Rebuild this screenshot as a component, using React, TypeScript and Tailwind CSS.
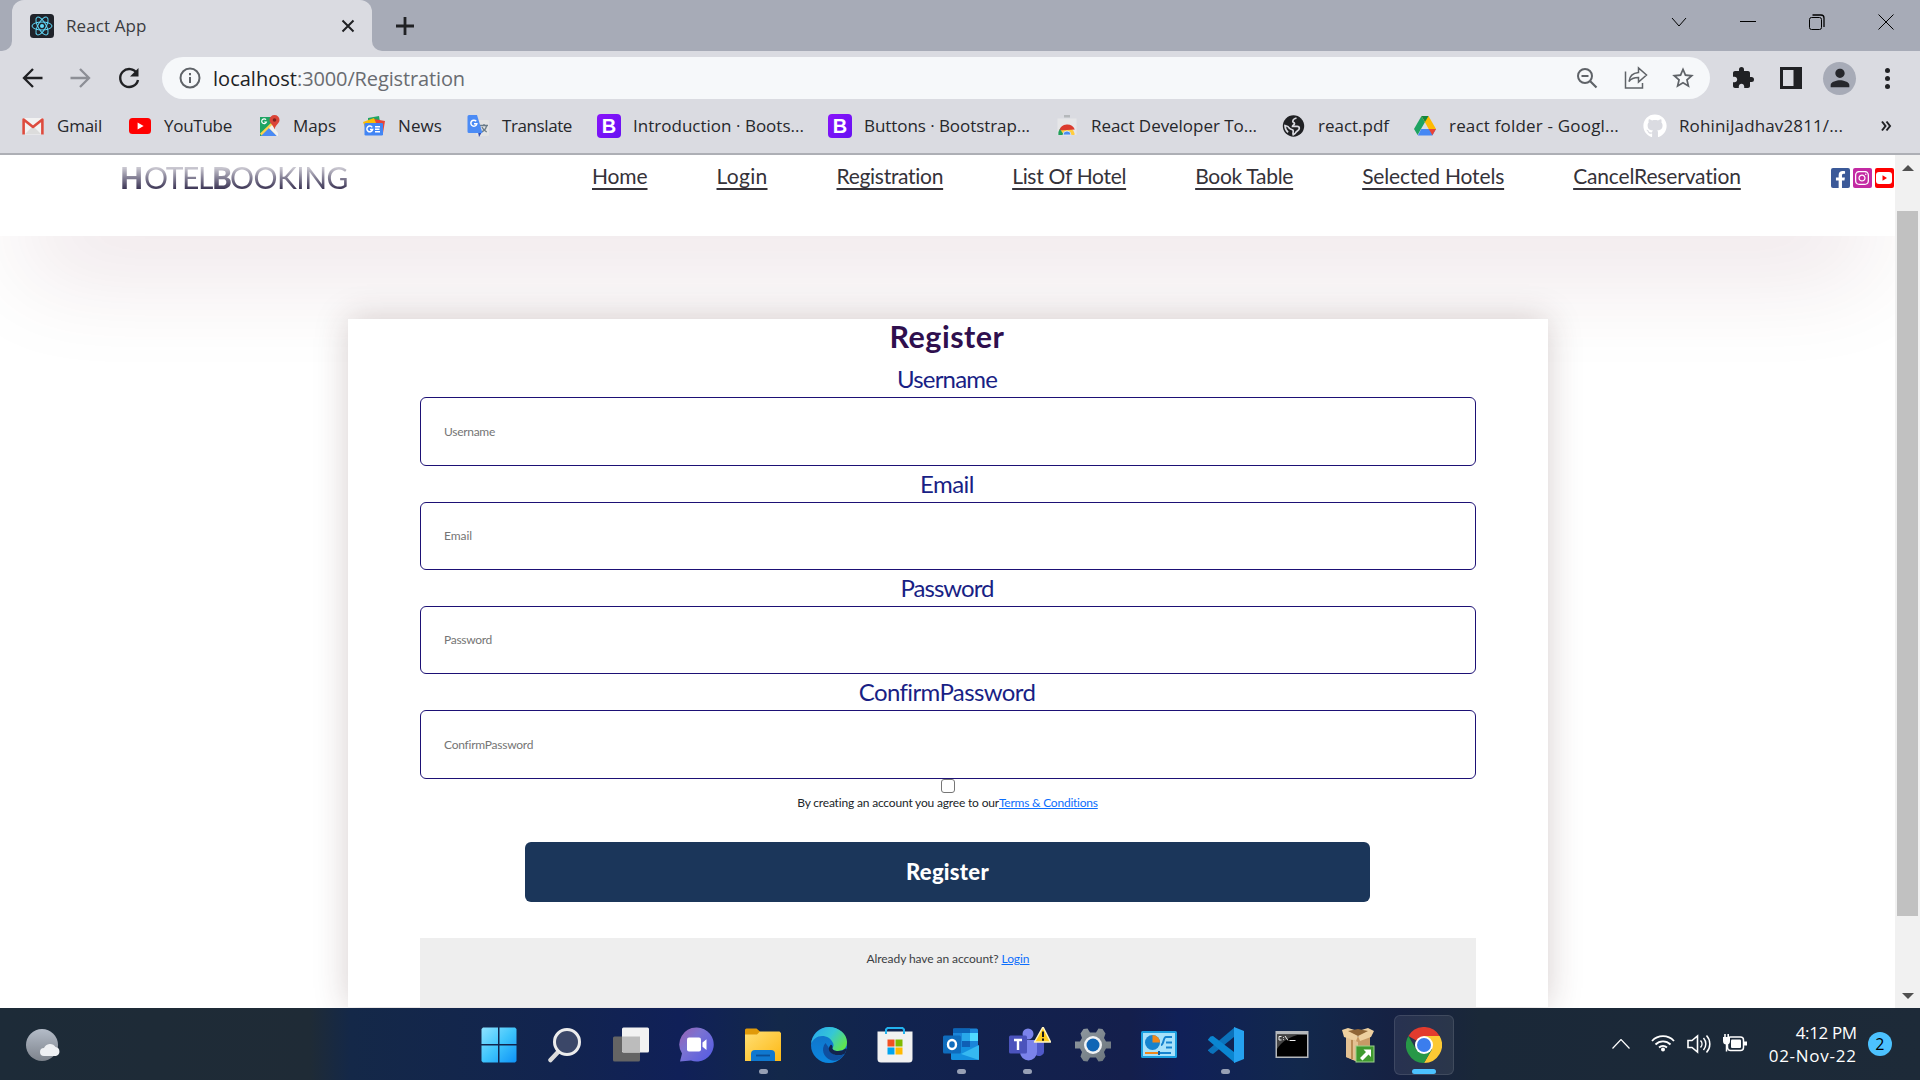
import { useLayoutEffect, useRef } from "react";
import type { ReactNode } from "react";
import { FaFacebookF, FaGithub, FaInstagram } from "react-icons/fa";
import { MdExtension, MdPerson, MdStarBorder } from "react-icons/md";

/** Inline text whose tracking is adjusted so that it fills exactly `w` pixels. */
function Fit({ w, className = "", children }: { w: number; className?: string; children: string }) {
  const ref = useRef<HTMLSpanElement>(null);
  useLayoutEffect(() => {
    const el = ref.current;
    if (!el) return;
    el.style.letterSpacing = "0px";
    const natural = el.getBoundingClientRect().width;
    el.style.letterSpacing = `${(w - natural) / children.length}px`;
  }, [w, children]);
  return (
    <span ref={ref} className={`inline-block whitespace-pre ${className}`}>
      {children}
    </span>
  );
}

/* ---------- bookmark icons ---------- */

const GmailIcon = () => (
  <svg viewBox="0 0 24 24" className="size-6">
    <rect x="1.5" y="4" width="21" height="16.5" rx="1.5" fill="#f2f2f2" />
    <path d="M4 20 12 12l8 8z" fill="#dcdcdc" />
    <path d="M2.6 20.5V5.6L12 13l9.4-7.4v14.9" fill="none" stroke="#dd4b3e" strokeWidth="2.6" strokeLinejoin="round" />
  </svg>
);
const YouTubeIcon = () => (
  <svg viewBox="0 0 24 24" className="size-6">
    <rect x="1" y="4" width="22" height="16" rx="3.5" fill="#f00" />
    <path d="M9.6 8.6v6.8l6-3.4z" fill="#fff" />
  </svg>
);
const MapsIcon = () => (
  <svg viewBox="0 0 24 24" className="size-6">
    <path d="M3 3h15v19H3z" fill="#1fa463" />
    <path d="M3 19.500 14 9l4 3v10H5z" fill="#fbd24b" />
    <path d="m4 22 8-8 8 8z" fill="#4a8af4" />
    <path d="m12 14 3-3 6 8v3h-1z" fill="#f1f1f1" />
    <path d="M9 5.700A2.400 2.400 0 1 0 9.400 8H7.200" fill="none" stroke="#fff" strokeWidth="1.200" />
    <path d="M17.500 1a5 5 0 0 0-5 5c0 3.500 4 4.500 5 9.500 1-5 5-6 5-9.500a5 5 0 0 0-5-5z" fill="#db4437" />
    <circle cx="17.500" cy="6" r="1.800" fill="#7b231e" />
  </svg>
);
const NewsIcon = () => (
  <svg viewBox="0 0 24 24" className="size-6">
    <path d="m6 4 11-2 1 6H6z" fill="#1fa463" />
    <path d="m12 5 11 2-2 12-9-2z" fill="#ea4335" />
    <path d="m1 8 11-4 4 10-11 5z" fill="#fbbc04" />
    <rect x="2.500" y="9" width="18.500" height="12.500" rx="1.300" fill="#4285f4" />
    <path d="M10.200 13.300A2.900 2.900 0 1 0 10.600 15.600H8M13 12.800h5M13 15.300h4.500M13 17.800h5" fill="none" stroke="#fff" strokeWidth="1.500" />
  </svg>
);
const TranslateIcon = () => (
  <svg viewBox="0 0 24 24" className="size-6">
    <rect x="10" y="6" width="13" height="16" rx="1.500" fill="#e3e3e3" />
    <path d="M14 11.500h8M18 10v1.500M20.500 12c-.6 3-3 5-5 6M16 13c1 2.500 3 4 4.700 5" stroke="#6b7c88" strokeWidth="1.300" fill="none" />
    <path d="m12 18 4 0-3 5z" fill="#3350b5" />
    <path d="M3 1h8l5.500 18H3a1.500 1.500 0 0 1-1.500-1.500v-15A1.500 1.500 0 0 1 3 1z" fill="#4b8bf5" />
    <path d="M10.200 7.300A3 3 0 1 0 10.800 9.800H8" fill="none" stroke="#fff" strokeWidth="1.500" />
  </svg>
);
const BootstrapIcon = () => (
  <span className="flex size-6 items-center justify-center rounded-[4px] bg-gradient-to-br from-[#8a12fb] to-[#6610f2] font-['Liberation_Sans'] text-[20px] leading-none font-bold text-white">
    B
  </span>
);
const WebStoreIcon = () => (
  <svg viewBox="0 0 24 24" className="size-6">
    <path d="M9 1h6v2.500H9z" fill="#b5b8bb" />
    <path d="M2.500 4.500h19V21h-19z" fill="#e6e6e8" />
    <path d="M4.500 21v-1.500a7.600 7.600 0 0 1 15 0V21z" fill="#ffcd40" />
    <path d="M4.200 16.500a8.300 8.300 0 0 1 15.600-1L12 16z" fill="#db3b2e" />
    <path d="M3.400 21c-.3-3 .4-4.500 1.500-6l4 6z" fill="#22a05a" />
    <path d="M8 21a4 4 0 1 1 8 0z" fill="#4a8cf0" stroke="#e8eefa" strokeWidth=".8" />
  </svg>
);
const GlobeIcon = () => (
  <svg viewBox="0 0 24 24" className="size-6">
    <circle cx="11.500" cy="12" r="10.700" fill="#202124" />
    <path d="M14.500 4.200c-1.500.2-3.700 1.500-3.700 3.300 0 1.200 1.700 1 1.700 2.200 0 1.300-2 1.300-2 2.600h4.800c1.300 0 2 1 2 2 0 2.500-2.800 2.200-4.200 5.200l-1.900 1.200c-1-1.700 1-3.500-.4-4.700-1.300-1-3.500-.8-4-2.400-.3-1.400-2.300-1.600-3.800-2 .1 3 1.300 5.200 3.100 6.800" fill="none" stroke="#d9dae0" strokeWidth="1.700" />
  </svg>
);
const DriveIcon = () => (
  <svg viewBox="0 0 24 24" className="size-6">
    <path d="M8.500 2 1 15l3.600 6L12 8z" fill="#1ea362" />
    <path d="M8.500 2h7L23 15h-7.300z" fill="#ffba00" />
    <path d="M15.700 15H23l-3.600 6.500H4.800l3.500-6.400h8z" fill="#4688f4" />
    <path d="M15.700 15H23l-3.600 6.200z" fill="#ea4335" />
    <path d="M8.500 2h7L12 8z" fill="#11863f" />
  </svg>
);

const BOOKMARKS: { icon: ReactNode; label: string; w: number }[] = [
  { icon: <GmailIcon />, label: "Gmail", w: 45 },
  { icon: <YouTubeIcon />, label: "YouTube", w: 68 },
  { icon: <MapsIcon />, label: "Maps", w: 43 },
  { icon: <NewsIcon />, label: "News", w: 44 },
  { icon: <TranslateIcon />, label: "Translate", w: 70 },
  { icon: <BootstrapIcon />, label: "Introduction · Boots...", w: 171 },
  { icon: <BootstrapIcon />, label: "Buttons · Bootstrap...", w: 166 },
  { icon: <WebStoreIcon />, label: "React Developer To...", w: 166 },
  { icon: <GlobeIcon />, label: "react.pdf", w: 71 },
  { icon: <DriveIcon />, label: "react folder - Googl...", w: 170 },
  { icon: <FaGithub className="size-6 text-white" />, label: "RohiniJadhav2811/...", w: 164 },
];

/* ---------- browser chrome ---------- */

function TabStrip() {
  return (
    <div className="flex h-[51px] bg-[#a7abb7]">
      <div className="flex w-3 items-end bg-[#dadbe1]">
        <div className="h-full w-full rounded-br-[10px] bg-[#a7abb7]" />
      </div>
      <div className="bg-[#a7abb7]">
        <div className="flex h-[51px] w-[360px] items-center rounded-t-[12px] bg-[#dadbe1] pl-[18px]">
          <svg viewBox="0 0 24 24" className="size-6">
            <rect width="24" height="24" rx="3.500" fill="#20232a" />
            <g fill="none" stroke="#61dafb" strokeWidth="1">
              <ellipse cx="12" cy="12" rx="10" ry="4" />
              <ellipse cx="12" cy="12" rx="10" ry="4" transform="rotate(60 12 12)" />
              <ellipse cx="12" cy="12" rx="10" ry="4" transform="rotate(120 12 12)" />
            </g>
            <circle cx="12" cy="12" r="2" fill="#61dafb" />
          </svg>
          <Fit w={80.500} className="ml-3 text-[17px] text-[#3a3b40]">React App</Fit>
          <svg viewBox="0 0 14 14" className="mr-[17px] ml-auto size-[14px]">
            <path d="m1.500 1.500 11 11m0-11-11 11" stroke="#202124" strokeWidth="2" />
          </svg>
        </div>
      </div>
      <div className="w-3 bg-[#dadbe1]">
        <div className="h-full rounded-bl-[10px] bg-[#a7abb7]" />
      </div>
      <svg viewBox="0 0 18 18" className="mt-[17px] ml-3 size-[18px]">
        <path d="M9 0v18M0 9h18" stroke="#202124" strokeWidth="2.800" />
      </svg>
      <div className="mt-[14px] mr-[26px] ml-auto flex h-4 items-center text-black">
        <svg viewBox="0 0 16 16" className="size-4"><path d="m1 4 7 8 7-8" fill="none" stroke="currentColor" /></svg>
        <svg viewBox="0 0 16 16" className="ml-[53px] size-4"><path d="M0 7.500h16" stroke="currentColor" /></svg>
        <svg viewBox="0 0 16 16" className="ml-[53px] size-4">
          <rect x=".5" y="3.500" width="12" height="12" rx="2" fill="none" stroke="currentColor" />
          <path d="M3.500 1h8.500a3 3 0 0 1 3 3v9" fill="none" stroke="currentColor" strokeWidth="1.300" />
        </svg>
        <svg viewBox="0 0 16 16" className="ml-[53px] size-4"><path d="m.5.500 15 15m0-15-15 15" stroke="currentColor" /></svg>
      </div>
    </div>
  );
}

function Toolbar() {
  return (
    <div className="flex h-[54px] items-center pl-[21px]">
      <svg viewBox="0 0 24 24" className="size-6">
        <path d="M21.500 12H3M12 3l-9 9 9 9" fill="none" stroke="#202124" strokeWidth="2.300" />
      </svg>
      <svg viewBox="0 0 24 24" className="ml-6 size-6">
        <path d="M1.500 12H20M11 3l9 9-9 9" fill="none" stroke="#8d8f96" strokeWidth="2.300" />
      </svg>
      <svg viewBox="0 0 24 24" className="ml-6 size-6">
        <path d="M20 7.500A9 9 0 1 0 21 14" fill="none" stroke="#202124" strokeWidth="2.400" />
        <path d="M21.500 2v8.500H13z" fill="#202124" />
      </svg>
      <div className="ml-[21px] flex h-[42px] w-[1548px] items-center rounded-full bg-[#f6f8fa] pl-[17px]">
        <svg viewBox="0 0 22 22" className="size-[22px]">
          <circle cx="11" cy="11" r="9.500" fill="none" stroke="#5f6368" strokeWidth="2" />
          <path d="M11 10v6M11 6v2.200" stroke="#5f6368" strokeWidth="2" />
        </svg>
        <div className="mt-[2px] ml-[12px] text-[20px] leading-none">
          <Fit w={84} className="text-[#202124]">localhost</Fit>
          <Fit w={168} className="text-[#696c71]">:3000/Registration</Fit>
        </div>
        <svg viewBox="0 0 22 22" className="mr-[26px] ml-auto size-[22px]">
          <circle cx="9" cy="9" r="7" fill="none" stroke="#5f6368" strokeWidth="2" />
          <path d="M5.500 9h7M14 14l6.500 6.500" stroke="#5f6368" strokeWidth="2.200" />
        </svg>
        <svg viewBox="0 0 24 24" className="mr-[22px] size-6">
          <path d="M1.500 5.500V22h17v-5M14.500 6.500V2L22.500 9l-8 7v-4.500c-5 0-7.500 1-9.500 4 .5-5 3.500-8.500 9.500-9z" fill="none" stroke="#5f6368" strokeWidth="1.500" />
        </svg>
        <MdStarBorder className="mr-[14px] size-[26px] text-[#5f6368]" />
      </div>
      <MdExtension className="ml-[21px] size-6 text-[#202124]" />
      <svg viewBox="0 0 22 22" className="ml-[25px] size-[22px]">
        <path fillRule="evenodd" d="M0 0h22v22H0zM3 3h10.500v16H3z" fill="#202124" />
      </svg>
      <div className="ml-[21px] flex size-[33px] items-center justify-center rounded-full bg-[#a7abb7]">
        <MdPerson className="size-[28px] text-[#26272c]" />
      </div>
      <div className="ml-[29px] flex flex-col gap-[3px]">
        <i className="size-[5px] rounded-full bg-[#202124]" />
        <i className="size-[5px] rounded-full bg-[#202124]" />
        <i className="size-[5px] rounded-full bg-[#202124]" />
      </div>
    </div>
  );
}

function BookmarkBar() {
  return (
    <div className="grid h-[42px] grid-cols-[107px_129px_105px_104px_131px_231px_227px_227px_131px_230px_238px_20px] items-center pl-[21px] text-[17px] text-[#26272b]">
      {BOOKMARKS.map((b, i) => (
        <div key={i} className="flex items-center gap-3">
          {b.icon}
          <Fit w={b.w} className="leading-6">{b.label}</Fit>
        </div>
      ))}
      <svg viewBox="0 0 12 12" className="ml-[-1px] size-3">
        <path d="m2 1.500 3.500 4.500L2 10.500M6.500 1.500 10 6l-3.500 4.500" fill="none" stroke="#202124" strokeWidth="2" />
      </svg>
    </div>
  );
}

/* ---------- hotel page ---------- */

const LINKS: [string, number][] = [
  ["Home", 55.500], ["Login", 51], ["Registration", 107], ["List Of Hotel", 114],
  ["Book Table", 98], ["Selected Hotels", 142], ["CancelReservation", 168],
];

function NavBar() {
  return (
    <nav className="-mt-[60px] flex h-[141px] shrink-0 bg-white pt-[60px] pl-[120px] shadow-[0_65px_100px_-25px_rgba(90,0,35,0.11)]">
      <div className="mt-[4px] h-9 w-[229px] bg-gradient-to-b from-[#c9c7d0] from-25% to-[#2f2748] to-90% bg-clip-text text-[30px] leading-9 whitespace-nowrap text-transparent">
        <Fit w={24} className="font-black">H</Fit>
        <Fit w={68} className="font-normal">OTEL</Fit>
        <Fit w={18} className="font-black">B</Fit>
        <Fit w={118} className="font-normal">OOKING</Fit>
      </div>
      <div className="mt-[5px] ml-[243px] flex h-8 gap-[69px] text-[21px] leading-8 text-[#353239]">
        {LINKS.map(([label, w]) => (
          <a key={label}>
            <Fit w={w} className="underline decoration-2 underline-offset-[4px]">{label}</Fit>
          </a>
        ))}
      </div>
      <div className="mt-[13px] ml-[90px] flex h-5 gap-[3px]">
        <span className="flex h-5 w-[19px] items-end justify-center rounded-[2px] bg-[#3b5998]"><FaFacebookF className="size-[17px] text-white" /></span>
        <span className="flex h-5 w-[19px] items-center justify-center rounded-[2px] bg-[#c32aa3]"><FaInstagram className="size-[16px] text-white" /></span>
        <span className="flex h-5 w-[19px] items-center justify-center rounded-[2px] bg-[#f00]">
          <svg viewBox="0 0 16 12" className="h-3 w-4"><rect width="16" height="12" rx="3" fill="#fff" /><path d="M6.500 3.300v5.400L11 6z" fill="#f00" /></svg>
        </span>
      </div>
    </nav>
  );
}

const FIELDS: { label: string; w: number; pw: number; box: string }[] = [
  { label: "Username", w: 100, pw: 51, box: "h-[69px]" },
  { label: "Email", w: 54, pw: 28, box: "h-[68px]" },
  { label: "Password", w: 93, pw: 48, box: "h-[68px]" },
  { label: "ConfirmPassword", w: 176, pw: 89, box: "h-[69px]" },
];

function RegisterCard() {
  return (
    <div className="mt-[83px] ml-[348px] flex h-[688px] w-[1200px] shrink-0 flex-col items-center bg-white px-[72px] shadow-[0_0_32px_rgba(70,30,30,0.22)]">
      <h1 className="mr-[2px] h-[42px] text-[30.500px] leading-[35px] font-bold text-[#2f0f4e]"><Fit w={115}>Register</Fit></h1>
      {FIELDS.map((f) => (
        <label key={f.label} className="flex w-full flex-col items-center">
          <span className="mr-[2px] h-9 text-[24px] leading-[35px] text-[#191f85]"><Fit w={f.w}>{f.label}</Fit></span>
          <span className={`flex w-full items-center rounded-[6px] border border-[#1d1175] pl-[23px] text-[12px] text-[#757575] ${f.box}`}>
            <Fit w={f.pw} className="leading-4">{f.label}</Fit>
          </span>
        </label>
      ))}
      <span className="mr-[1px] size-[14px] shrink-0 rounded-[3px] border border-[#767676] bg-white" />
      <p className="mr-[1px] h-[49px] pt-[1px] text-[12px] leading-[18px] text-[#212529]">
        <Fit w={202}>By creating an account you agree to our</Fit>
        <Fit w={99} className="text-[#0d6efd] underline">Terms &amp; Conditions</Fit>
      </p>
      <button className="mr-[1px] h-[60px] w-[845px] shrink-0 rounded-[6px] bg-[#1b365a] text-[22px] leading-none font-black text-white">
        <Fit w={83}>Register</Fit>
      </button>
      <div className="mt-9 w-full flex-1 bg-[#eee] pt-3 text-center text-[12px] leading-[18px] text-[#3c4043]">
        <Fit w={135}>Already have an account? </Fit>
        <Fit w={28} className="text-[#0d6efd] underline">Login</Fit>
      </div>
    </div>
  );
}

function Scrollbar() {
  return (
    <div className="flex w-[25px] flex-col items-center bg-[#f1f1f1] pt-[10px] pb-[9px]">
      <svg viewBox="0 0 12 6" className="h-[6px] w-3"><path d="M6 0 12 6H0z" fill="#505050" /></svg>
      <div className="mt-10 h-[705px] w-[21px] bg-[#c1c1c1]" />
      <svg viewBox="0 0 12 6" className="mt-auto h-[6px] w-3"><path d="M6 6 12 0H0z" fill="#505050" /></svg>
    </div>
  );
}

/* ---------- taskbar ---------- */

const StartIcon = () => (
  <svg viewBox="0 0 36 36" className="size-9">
    <defs><linearGradient id="win" x1="0" y1="0" x2="1" y2="1"><stop stopColor="#8fe3ff" /><stop offset=".5" stopColor="#3fc5fc" /><stop offset="1" stopColor="#0e93f7" /></linearGradient></defs>
    <path d="M2 .5h15V17H.500V2zM18.500.500H34L35.500 2v15h-17zM.500 18.500H17v17H2L.500 34zM18.500 18.500h17V34L34 35.500H18.500z" fill="url(#win)" />
  </svg>
);
const SearchIcon = () => (
  <svg viewBox="0 0 36 36" className="size-9">
    <path d="m12 24-8.500 9" stroke="#dcdcdc" strokeWidth="4.500" strokeLinecap="round" />
    <circle cx="20" cy="15" r="12.500" fill="#3b4768" stroke="#ececec" strokeWidth="3" />
  </svg>
);
const TaskViewIcon = () => (
  <svg viewBox="0 0 36 36" className="size-9">
    <rect y="9.500" width="27" height="25" rx="1.500" fill="#646464" />
    <rect x="9" y=".5" width="27" height="25" rx="1.500" fill="#f2f2f2" />
    <path d="M9 9.500h18v16H10.500L9 24z" fill="#bcbcbc" />
  </svg>
);
const ChatIcon = () => (
  <svg viewBox="0 0 36 36" className="size-9">
    <defs><linearGradient id="chat" x1="0" y1="0" x2=".9" y2=".8"><stop stopColor="#9a5fb0" /><stop offset=".45" stopColor="#7b73d2" /><stop offset="1" stopColor="#5b5fe0" /></linearGradient></defs>
    <path d="M18 .5a17 17 0 1 1-6 33L1 34.500l2-8A17 17 0 0 1 18 .5z" fill="url(#chat)" />
    <rect x="8" y="10.500" width="14" height="14" rx="2" fill="#fff" />
    <path d="m23.500 15.500 4-3.300V23l-4-3.300z" fill="#fff" />
  </svg>
);
const ExplorerIcon = () => (
  <svg viewBox="0 0 36 36" className="size-9">
    <defs><linearGradient id="fold" x1="0" y1="0" x2="1" y2="1"><stop stopColor="#ffdf75" /><stop offset="1" stopColor="#fdb813" /></linearGradient></defs>
    <path d="M0 3a1.500 1.500 0 0 1 1.500-1.500h10L15 4.500V9H0z" fill="#e09a0a" />
    <path d="M0 7.500h12l3-3h19.500L36 6v28H0z" fill="url(#fold)" />
    <path d="M6 34V27a4 4 0 0 1 4-4h16a4 4 0 0 1 4 4v7z" fill="#0f78cf" />
    <path d="M11 28.500h14" stroke="#0b4f96" strokeWidth="1.800" />
  </svg>
);
const EdgeIcon = () => (
  <svg viewBox="0 0 36 36" className="size-9">
    <defs>
      <linearGradient id="eg1" x1="0" y1=".2" x2="1" y2=".7"><stop stopColor="#2aa9ea" /><stop offset=".5" stopColor="#35c7d6" /><stop offset="1" stopColor="#62e648" /></linearGradient>
      <linearGradient id="eg2" x1="0" y1="0" x2="0" y2="1"><stop stopColor="#1270c4" /><stop offset="1" stopColor="#0b87e0" /></linearGradient>
    </defs>
    <circle cx="18" cy="18" r="18" fill="url(#eg2)" />
    <path d="M14.500 16c-5 6-2 14 5 17 5 1.800 10 .3 14-6-6 3-13 1-14.500-4.500z" fill="#0f4fa0" />
    <path d="M0 17C1 7 9 0 18 0c10 0 18 7 18 15 0 5-3 9-9 9-4 0-6.500-1.500-5.500-3 1-1.600 1.500-3 .5-5-2-4.500-6-7-11-7C6 9 2 12 0 17z" fill="url(#eg1)" />
    <path d="M21.500 21c-.6 1.500 2 3 5.500 3 3 0 5.500-.8 7.500-2.500L36 22l-2.500 5c-6 2.500-12 1-14.500-2-2-3-1-5 .5-7 1-1 2.500 1 2 3z" fill="#12244e" />
  </svg>
);
const StoreIcon = () => (
  <svg viewBox="0 0 36 36" className="size-9">
    <path d="M.500 4.500h35V32a3.500 3.500 0 0 1-3.500 3.500H4A3.500 3.500 0 0 1 .500 32z" fill="#f1f1f1" />
    <path d="M9 7V2.500L10.500 1h15L27 2.500V7" fill="none" stroke="#22b2ee" strokeWidth="2" />
    <path d="M10.500 12.500h7v7h-7z" fill="#f25022" /><path d="M18.500 12.500h7v7h-7z" fill="#7fba00" />
    <path d="M10.500 20.500h7v7h-7z" fill="#00a4ef" /><path d="M18.500 20.500h7v7h-7z" fill="#ffb900" />
  </svg>
);
const OutlookIcon = () => (
  <svg viewBox="0 0 36 36" className="size-9">
    <rect x="10" y="1.500" width="25" height="21" rx="1.500" fill="#1b85d9" />
    <path d="M19 6h8v8h-8z" fill="#28a8ea" /><path d="M27 6h8v8h-8z" fill="#50d9ff" /><path d="M19 14h8v8h-8z" fill="#0f5fb5" /><path d="M10 1.500h17V6H10z" fill="#0b64b8" />
    <path d="M8 20h28v11.500a1.500 1.500 0 0 1-1.500 1.500h-25A1.500 1.500 0 0 1 8 31.500z" fill="#1490df" />
    <path d="m36 18-18 9 18 6z" fill="#35b8f1" />
    <rect y="8.500" width="18" height="18" rx="1.500" fill="#0f6cbd" />
    <ellipse cx="9" cy="17.500" rx="4" ry="4.500" fill="none" stroke="#fff" strokeWidth="2.400" />
  </svg>
);
const TeamsIcon = () => (
  <svg viewBox="0 0 42 36" className="ml-3 h-9 w-[42px] self-start">
    <path d="M25 13h10v12a5 5 0 0 1-8 3z" fill="#5059c9" />
    <circle cx="19" cy="7" r="5.500" fill="#7b83eb" />
    <path d="M11 13h17v12a8.500 8.500 0 0 1-17 0z" fill="#7b83eb" />
    <rect y="8.500" width="18" height="18" rx="1.500" fill="#4b53bc" />
    <path d="M5 13h8M9 13v10" stroke="#fff" strokeWidth="2.400" />
    <path d="m34 0 7.500 15h-16z" fill="#ffce1f" stroke="#fff3c0" strokeWidth="1.500" strokeLinejoin="round" />
    <path d="M34 4.500v5.500M34 11.500v2.200" stroke="#1b1b1b" strokeWidth="2" />
  </svg>
);
const SettingsIcon = () => (
  <svg viewBox="0 0 36 36" className="size-9">
    <defs><linearGradient id="gear" x1="0" y1="0" x2="1" y2="1"><stop stopColor="#929ba2" /><stop offset="1" stopColor="#69737b" /></linearGradient></defs>
    <path d="m8.500 2 4-.5 2.500 4h6l2.500-4 4 .5 3 4.500-1.500 4.500 2 3.500h5v7h-5l-2 3.500 1.500 4.500-3 4.500-4 .5-2.500-4h-6l-2.500 4-4-.5-3-4.500L7 25l-2-3.500H0v-7h5L7 11 5.500 6.500z" fill="url(#gear)" />
    <circle cx="18" cy="18" r="9" fill="#f0f2f4" />
    <circle cx="18" cy="18" r="6.500" fill="#1065b5" />
  </svg>
);
const ControlPanelIcon = () => (
  <svg viewBox="0 0 36 36" className="size-9">
    <rect y="4" width="36" height="27" rx="1.500" fill="#1a9fe0" />
    <rect x="2" y="6" width="32" height="23" fill="#a8e2fb" />
    <circle cx="11.500" cy="15.500" r="7.500" fill="#1683cf" />
    <path d="M11.500 15.500V8a7.500 7.500 0 0 1 7.500 7.500z" fill="#f0871a" />
    <path d="M20 18c3 0 2-8 5-8h6M25 15.500h6M25 20.500h6" stroke="#1683cf" strokeWidth="2" fill="none" />
    <path d="M4 26h14" stroke="#f0871a" strokeWidth="2" /><path d="M18 26h12" stroke="#1683cf" strokeWidth="2" />
    <path d="M18 24v4" stroke="#0f5f9f" strokeWidth="2" />
  </svg>
);
const CodeIcon = () => (
  <svg viewBox="0 0 36 36" className="size-9">
    <path d="m27 0-1 10L5 27l-2.500-1L0 23.500V23z" fill="#0b72bb" />
    <path d="M0 12.500 2.500 9.500 5 9l21 16 1 11L0 13z" fill="#0a86d1" />
    <path d="m26 0 10 4v28l-10 4z" fill="#25a2f0" />
  </svg>
);
const TerminalIcon = () => (
  <svg viewBox="0 0 36 36" className="size-9">
    <rect x="1.500" y="4" width="33" height="27" fill="#b5b8bb" />
    <path d="M3 7.500h30v22H3z" fill="#000" /><path d="M3 7.500h24C17 8.500 7 15 3 22z" fill="#444" />
    <path d="M7.500 9.500H5v3.500h2.500M9.500 10v.8M9.500 12.300v.8M11 9l3 4.500M15.500 13.500h6" stroke="#eee" fill="none" />
  </svg>
);
const BoxIcon = () => (
  <svg viewBox="0 0 36 36" className="size-9">
    <path d="M6 10h24v20l-12 5-12-5z" fill="#c79a66" /><path d="m6 10 12 5v20L6 30z" fill="#e3c193" />
    <path d="m2 3 6-2 10 3 10-3 6 3-3 6-11 4-2-5-2 5L4 10z" fill="#edcf9f" />
    <path d="m8 4 10-2 10 2-10 5z" fill="#8f6536" /><path d="M12 13v19" stroke="#b98b55" strokeWidth="2" />
    <rect x="16" y="19" width="18" height="16" fill="#3f9a2f" stroke="#9bd08c" />
    <path d="m20 31 6-6-2.500-2.500H31V30l-2.500-2.500-6 6z" fill="#fff" />
  </svg>
);
const ChromeIcon = () => (
  <svg viewBox="0 0 36 36" className="size-9">
    <path d="M18 18 2.400 9A18 18 0 0 1 33.600 9z" fill="#e33b2e" />
    <path d="M18 9h15.600A18 18 0 0 1 18 36l7.800-13.500z" fill="#fcc934" />
    <path d="M2.400 9A18 18 0 0 0 18 36l7.800-13.500L18 27l-7.800-4.500z" fill="#279847" />
    <circle cx="18" cy="18" r="9" fill="#fff" /><circle cx="18" cy="18" r="7" fill="#3b7ded" />
  </svg>
);

const APPS: { id: string; icon: ReactNode; open?: boolean; active?: boolean }[] = [
  { id: "start", icon: <StartIcon /> },
  { id: "search", icon: <SearchIcon /> },
  { id: "tasks", icon: <TaskViewIcon /> },
  { id: "chat", icon: <ChatIcon /> },
  { id: "explorer", icon: <ExplorerIcon />, open: true },
  { id: "edge", icon: <EdgeIcon /> },
  { id: "store", icon: <StoreIcon /> },
  { id: "outlook", icon: <OutlookIcon />, open: true },
  { id: "teams", icon: <TeamsIcon />, open: true },
  { id: "settings", icon: <SettingsIcon /> },
  { id: "panel", icon: <ControlPanelIcon /> },
  { id: "code", icon: <CodeIcon />, open: true },
  { id: "terminal", icon: <TerminalIcon /> },
  { id: "box", icon: <BoxIcon /> },
  { id: "chrome", icon: <ChromeIcon />, active: true },
];

function Taskbar() {
  return (
    <footer className="flex h-[72px] items-start bg-[linear-gradient(90deg,#1d2b38_0,#1f2b36_310px,#142848_350px,#12244f_560px,#102058_680px,#13284a_780px,#11234f_900px,#141f4c_1130px,#102058_1180px,#12284c_1300px,#162142_1400px,#1a2838_1480px,#1d2a38_100%)]">
      <svg viewBox="0 0 36 34" className="mt-[20px] ml-[25px] h-[34px] w-9">
        <defs><linearGradient id="moon" x1="0" y1="0" x2="0" y2="1"><stop stopColor="#b4bcc8" /><stop offset="1" stopColor="#7d838c" /></linearGradient></defs>
        <circle cx="17" cy="17" r="16" fill="url(#moon)" />
        <path d="M19 28a4 4 0 0 1 0-8 6.500 6.500 0 0 1 11.500-1 4.600 4.600 0 0 1 .5 9z" fill="#eef0f3" />
      </svg>
      <div className="ml-[405px] flex">
        {APPS.map((a) => (
          <div key={a.id} className="flex w-[66.05px] justify-center pt-[7px]">
            <div className={`flex h-[60px] w-[60px] flex-col items-center justify-between ${a.active ? "rounded-[6px] border border-white/10 bg-white/8 pt-[11px]" : "pt-3 pb-[1px]"}`}>
              {a.icon}
              {a.open && <i className="h-[5px] w-[9px] rounded-full bg-[#97a0b5]" />}
              {a.active && <i className="h-[5px] w-6 rounded-full bg-[#4cc2ff]" />}
            </div>
          </div>
        ))}
      </div>
      <svg viewBox="0 0 18 10" className="mt-[31px] ml-[155px] h-[10px] w-[18px]"><path d="m.500 9.500 8.500-9 8.500 9" fill="none" stroke="#fff" strokeWidth="1.200" /></svg>
      <svg viewBox="0 0 24 18" className="mt-[26px] ml-[21px] h-[18px] w-6">
        <path d="M1 7a15 15 0 0 1 22 0M4.500 10.500a10.500 10.500 0 0 1 15 0M8 13.500a6 6 0 0 1 8 0" fill="none" stroke="#fff" strokeWidth="1.800" />
        <circle cx="12" cy="15.500" r="2" fill="#fff" />
      </svg>
      <svg viewBox="0 0 24 20" className="mt-[26px] ml-3 h-5 w-6">
        <path d="M1 6.500h4L10.500 2v16L5 13.500H1z" fill="none" stroke="#fff" strokeWidth="1.600" />
        <path d="M13.500 6.500a5 5 0 0 1 0 7M16.500 4a9 9 0 0 1 0 12M19.500 1.500a12.500 12.500 0 0 1 0 17" fill="none" stroke="#fff" strokeWidth="1.500" />
      </svg>
      <svg viewBox="0 0 24 20" className="mt-[25px] ml-3 h-5 w-6">
        <rect x="4.500" y="4" width="16" height="13.500" rx="3" fill="none" stroke="#fff" strokeWidth="1.500" />
        <rect x="8" y="6.500" width="10" height="8.500" rx="1" fill="#fff" />
        <path d="M21 8.500h3v4h-3zM0 4h7v4a3.500 3.500 0 0 1-7 0zM1.200 1h1.600v4H1.200zM4.400 1H6v4H4.400z" fill="#fff" />
        <path d="M3.500 10v8.500" stroke="#fff" strokeWidth="1.500" />
      </svg>
      <div className="mt-[13px] ml-[22px] flex w-[88px] flex-col items-end text-[17px] leading-[23px] text-white">
        <Fit w={61}>4:12 PM</Fit>
        <Fit w={88}>02-Nov-22</Fit>
      </div>
      <span className="mt-6 ml-[11px] flex size-6 items-center justify-center rounded-full bg-[#4cc2ff] text-[16px] leading-none text-black">2</span>
    </footer>
  );
}

export default function App() {
  return (
    <div className="flex h-[1080px] w-[1920px] flex-col overflow-hidden bg-white font-['Open_Sans',sans-serif]">
      <header className="h-[155px] shrink-0 border-b-2 border-[#adafb5] bg-[#dadbe1]">
        <TabStrip />
        <Toolbar />
        <BookmarkBar />
      </header>
      <div className="flex h-[853px] shrink-0">
        <main className="flex w-[1895px] flex-col overflow-hidden font-['Lato',sans-serif]">
          <NavBar />
          <RegisterCard />
        </main>
        <Scrollbar />
      </div>
      <Taskbar />
    </div>
  );
}
